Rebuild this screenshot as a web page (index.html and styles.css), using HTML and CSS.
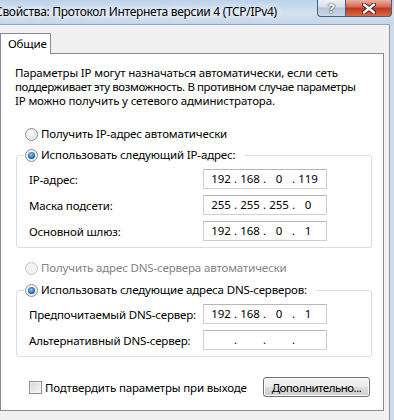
FILE: index.html
```html
<!DOCTYPE html>
<html lang="ru">
<head>
  <meta charset="UTF-8">
  <title>Свойства: Протокол Интернета версии 4 (TCP/IPv4)</title>
  <link rel="stylesheet" href="styles.css">
</head>
<body>
  <div class="titlebar">
    <span class="title">Свойства: Протокол Интернета версии 4 (TCP/IPv4)</span>
    <div class="caption-buttons">
      <span class="cap-btn help">?</span>
      <span class="cap-btn close">
        <svg width="14" height="11" viewBox="0 0 14 11">
          <path d="M2 1.5 L12 9.5 M12 1.5 L2 9.5" stroke="#3a1a14" stroke-width="4.2" stroke-linecap="round"/>
          <path d="M2 1.5 L12 9.5 M12 1.5 L2 9.5" stroke="#fff" stroke-width="2.4" stroke-linecap="round"/>
        </svg>
      </span>
    </div>
  </div>

  <div class="frame">
    <div class="client">
      <div class="tabs">
        <span class="tab">Общие</span>
      </div>

      <div class="panel">
        <p class="intro">Параметры IP могут назначаться автоматически, если сеть<br>
          <span class="tight">поддерживает эту возможность. В противном случае параметры</span><br>
          IP можно получить у сетевого администратора.</p>

        <label class="radio first"><span class="radio-mark"></span>Получить IP-адрес автоматически</label>

        <fieldset class="group">
          <legend><label class="radio"><span class="radio-mark on"></span>Использовать следующий IP-адрес:</label></legend>
          <div class="fields">
            <div class="field">
              <span>IP-адрес:</span>
              <div class="ip"><span class="oct">192</span><span class="dot">.</span><span class="oct">168</span><span class="dot">.</span><span class="oct">0</span><span class="dot">.</span><span class="oct">119</span></div>
            </div>
            <div class="field">
              <span>Маска подсети:</span>
              <div class="ip"><span class="oct">255</span><span class="dot">.</span><span class="oct">255</span><span class="dot">.</span><span class="oct">255</span><span class="dot">.</span><span class="oct">0</span></div>
            </div>
            <div class="field">
              <span>Основной шлюз:</span>
              <div class="ip"><span class="oct">192</span><span class="dot">.</span><span class="oct">168</span><span class="dot">.</span><span class="oct">0</span><span class="dot">.</span><span class="oct">1</span></div>
            </div>
          </div>
        </fieldset>

        <label class="radio disabled dns-auto"><span class="radio-mark"></span>Получить адрес DNS-сервера автоматически</label>

        <fieldset class="group dns">
          <legend><label class="radio"><span class="radio-mark on"></span>Использовать следующие адреса DNS-серверов:</label></legend>
          <div class="fields">
            <div class="field">
              <span>Предпочитаемый DNS-сервер:</span>
              <div class="ip"><span class="oct">192</span><span class="dot">.</span><span class="oct">168</span><span class="dot">.</span><span class="oct">0</span><span class="dot">.</span><span class="oct">1</span></div>
            </div>
            <div class="field">
              <span>Альтернативный DNS-сервер:</span>
              <div class="ip"><span class="oct"></span><span class="dot">.</span><span class="oct"></span><span class="dot">.</span><span class="oct"></span><span class="dot">.</span><span class="oct"></span></div>
            </div>
          </div>
        </fieldset>

        <div class="footer">
          <label class="check"><span class="check-mark"></span>Подтвердить параметры при выходе</label>
          <button class="btn">Дополнительно...</button>
        </div>
      </div>
    </div>
  </div>
</body>
</html>
```

FILE: styles.css
```css
* {
  box-sizing: border-box;
}

body {
  margin: 0;
  width: 394px;
  height: 420px;
  overflow: hidden;
  font-family: "Noto Sans", "Liberation Sans", sans-serif;
  font-size: 11.5px;
  letter-spacing: -0.15px;
  color: #000;
  background: #cddbeb;
}

/* title bar */
.titlebar {
  height: 24px;
  display: flex;
  justify-content: space-between;
  align-items: flex-start;
  background: linear-gradient(#bcd2ea, #d3e2f2 55%, #c4d6ea);
}

.title {
  margin-left: -5px;
  margin-top: 4px;
  line-height: 16px;
  font-size: 12px;
  letter-spacing: -0.3px;
  white-space: nowrap;
  text-shadow: 0 0 6px #fff, 0 0 10px #fff;
}

.caption-buttons {
  display: flex;
  margin-right: 2px;
}

.cap-btn {
  height: 17px;
  border: 1px solid #4f5f73;
  border-top: none;
  display: flex;
  align-items: center;
  justify-content: center;
}

.help {
  width: 28px;
  border-right: none;
  border-radius: 0 0 0 4px;
  background: linear-gradient(#eef2f7, #d4dde9 45%, #b7c6d8 50%, #cbd7e5);
  color: #fff;
  font-weight: bold;
  font-size: 13px;
  text-shadow: 0 0 1px #2c3a4c, 0 0 2px #2c3a4c;
}

.close {
  width: 47px;
  border-radius: 0 0 4px 0;
  background: linear-gradient(#eab1a3, #d4654f 45%, #c1351f 50%, #d56b48);
}

/* window client area */
.frame {
  display: flex;
  height: 396px;
}

.client {
  width: 390px;
  background: #f0f0f0;
  border-top: 1px solid #93a5ba;
  border-right: 1px solid #8a9bb0;
  padding-top: 8px;
}

.tabs {
  display: flex;
}

.tab {
  position: relative;
  z-index: 1;
  width: 51px;
  height: 21px;
  margin-bottom: -1px;
  padding: 3px 0 0 7px;
  line-height: 14px;
  background: #fff;
  border: 1px solid #898c95;
  border-bottom: none;
}

.panel {
  width: 384px;
  background: #fff;
  border: 1px solid #898c95;
  padding: 12px 11px 13px 14px;
  white-space: nowrap;
}

.intro {
  margin: 0;
  line-height: 14px;
}

.tight {
  letter-spacing: -0.4px;
}

.radio {
  display: flex;
  align-items: center;
  gap: 3px;
  line-height: 14px;
}

.radio.first {
  margin: 19px 0 0 10px;
}

.radio.dns-auto {
  margin: 13px 0 0 10px;
}

.radio.disabled {
  color: #838383;
}

.radio-mark {
  width: 13px;
  height: 13px;
  border-radius: 50%;
  border: 1px solid #8e8f8f;
  background: radial-gradient(circle at 40% 35%, #fff, #e4e4e4 60%, #cdcdcd);
  box-shadow: inset 0 0 0 1px #f6f6f6;
  display: flex;
  align-items: center;
  justify-content: center;
}

.disabled .radio-mark {
  border-color: #c3c3c3;
  background: #f2f2f2;
}

.radio-mark.on::after {
  content: "";
  width: 7px;
  height: 7px;
  border-radius: 50%;
  background: radial-gradient(circle at 45% 40%, #9fd0f5, #2a6cb5 55%, #163f78);
}

.group {
  margin: 7px 0 0 1px;
  padding: 7px 0 6px 0;
  border: 1px solid #d5dfe5;
  border-radius: 3px;
}

.group legend {
  margin-left: 7px;
  padding: 0 9px 0 1px;
}

.dns-auto + .group {
  margin-top: 8px;
}

.fields {
  display: flex;
  flex-direction: column;
  gap: 6px;
  padding-left: 12px;
}

.field {
  display: grid;
  grid-template-columns: 174px 124px;
  align-items: center;
}

.ip {
  display: flex;
  height: 20px;
  padding-left: 6px;
  line-height: 18px;
  background: #fff;
  border: 1px solid #ccd0d6;
  border-top-color: #b3b7bd;
}

.oct {
  width: 22px;
  text-align: center;
}

.dot {
  width: 7px;
  text-align: center;
}

/* bottom row */
.footer {
  display: flex;
  justify-content: space-between;
  align-items: center;
  margin-top: 20px;
  padding: 0 2px 0 14px;
}

.check {
  display: flex;
  align-items: center;
  gap: 3px;
}

.check-mark {
  width: 13px;
  height: 13px;
  border: 1px solid #8e8f8f;
  background: linear-gradient(135deg, #d4d4d4, #f7f7f7);
  box-shadow: inset 0 0 0 1px #f4f4f4;
}

.btn {
  width: 107px;
  height: 20px;
  padding: 0;
  font: inherit;
  letter-spacing: -0.5px;
  color: #000;
  border: 1px solid #707070;
  border-radius: 3px;
  background: linear-gradient(#f3f3f3, #ebebeb 50%, #dddddd 50%, #cfcfcf);
  box-shadow: inset 0 0 0 1px #fbfbfb;
}
```
